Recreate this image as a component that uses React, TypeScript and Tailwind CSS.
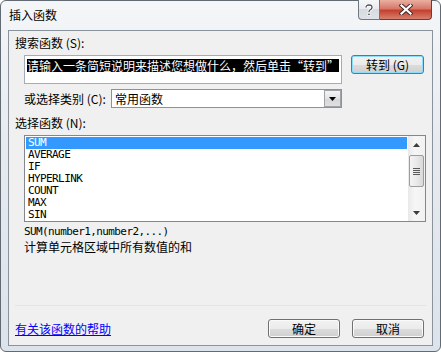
import React from "react";

const functions = ["SUM", "AVERAGE", "IF", "HYPERLINK", "COUNT", "MAX", "SIN"];

function Arrow({ up }: { up?: boolean }) {
  return (
    <svg width="7" height="4" viewBox="0 0 7 4">
      <path d={up ? "M3.5 0 L7 4 L0 4 Z" : "M0 0 L7 0 L3.5 4 Z"} fill="#3c3c3c" />
    </svg>
  );
}

function Button({ children, className, focused }: { children: React.ReactNode; className: string; focused?: boolean }) {
  return (
    <div
      className={
        "h-[19px] rounded-[3px] border flex items-center justify-center leading-none bg-[linear-gradient(#f2f2f2,#ebebeb_50%,#dddddd_50%,#cfcfcf)] " +
        (focused
          ? "border-[#3c7fb1] shadow-[inset_0_0_0_1px_#8fdcf8] "
          : "border-[#707070] shadow-[inset_0_0_0_1px_#fbfbfb] ") +
        className
      }
    >
      {children}
    </div>
  );
}

function TitleBar() {
  return (
    <div className="h-[29px] flex justify-between items-start">
      <div className="pl-[8px] pt-[8px] leading-[12px] text-[12px] text-black">插入函数</div>
      <div className="flex -mt-[1px] mr-[8px]">
        <div className="w-[22px] h-[20px] border border-[#6f7780] border-t-0 rounded-bl-[4px] bg-[linear-gradient(#f6f7f9,#e6e9ed_50%,#d6dbe0_50%,#dfe3e8)] flex items-center justify-center">
          <svg width="10" height="12" viewBox="0 0 10 12">
            <path d="M2 3.5 Q2 1 5 1 Q8 1 8 3.5 Q8 5 6 6 Q5 6.5 5 8" fill="none" stroke="#ffffff" strokeWidth="3" />
            <path d="M2 3.5 Q2 1 5 1 Q8 1 8 3.5 Q8 5 6 6 Q5 6.5 5 8" fill="none" stroke="#4a4f55" strokeWidth="1.3" />
            <rect x="3.8" y="9.2" width="2.4" height="2.4" fill="#4a4f55" stroke="#ffffff" strokeWidth="0.8" />
          </svg>
        </div>
        <div className="w-[52px] h-[20px] border border-[#6e3a33] border-t-0 border-l-0 rounded-br-[4px] bg-[linear-gradient(#eab0a2,#d7786a_45%,#c4412f_55%,#d6806e)] flex items-center justify-center">
          <svg width="14" height="11" viewBox="0 0 14 11">
            <path d="M2.5 1.5 L11.5 9.5 M11.5 1.5 L2.5 9.5" stroke="#4a2a26" strokeWidth="4.2" strokeLinecap="square" />
            <path d="M2.5 1.5 L11.5 9.5 M11.5 1.5 L2.5 9.5" stroke="#ffffff" strokeWidth="2.2" strokeLinecap="square" />
          </svg>
        </div>
      </div>
    </div>
  );
}

export default function App() {
  return (
    <div className="w-[441px] h-[352px] bg-white font-['Noto_Sans_CJK_SC',sans-serif] text-[12px] text-black">
      <div className="w-full h-full flex flex-col border border-[#626a73] rounded-[6px] bg-[linear-gradient(#f4f6f8,#e7ebf0_40%,#dde3ea)]">
        <TitleBar />
        <div className="mx-[7px] h-[316px] border border-[#8a929b] bg-[#f0f0f0] flex flex-col">
          <div className="pl-[6px] pt-[6px] leading-[12px]">搜索函数 (S):</div>

          <div className="mt-[6px] flex items-start">
            <div className="ml-[15px] w-[318px] h-[29px] border border-[#a5acb5] bg-white pl-[2px] pt-[1px]">
              <span className="inline-block bg-black text-white leading-[13px] whitespace-nowrap">
                请输入一条简短说明来描述您想做什么，然后单击
                <span className="inline-block w-[12px] text-right">“</span>转到
                <span className="inline-block w-[12px] text-left">”</span>
              </span>
            </div>
            <Button focused className="ml-[9px] w-[73px]">转到 (G)</Button>
          </div>

          <div className="mt-[5px] flex items-center h-[19px]">
            <div className="pl-[15px] w-[102px] leading-[12px]">或选择类别 (C):</div>
            <div className="w-[231px] h-[19px] border border-[#8e9196] bg-white flex items-center justify-between">
              <span className="pl-[3px] leading-[12px]">常用函数</span>
              <div className="w-[17px] h-[17px] border border-[#9ea3a9] bg-[linear-gradient(#f4f4f4,#e4e4e4_50%,#d6d6d6_50%,#e0e0e0)] flex items-center justify-center">
                <svg width="7" height="4" viewBox="0 0 7 4">
                  <path d="M0 0 L7 0 L3.5 4 Z" fill="#000" />
                </svg>
              </div>
            </div>
          </div>

          <div className="mt-[9px] pl-[6px] leading-[12px]">选择函数 (N):</div>

          <div className="mt-[6px] ml-[15px] w-[402px] h-[87px] border border-[#828790] bg-white flex">
            <div className="flex-1 p-[1px] font-['DejaVu_Sans_Mono',monospace] text-[11px] tracking-[-0.6px]">
              {functions.map((f, i) => (
                <div
                  key={f}
                  className={"h-[12px] leading-[12px] pl-[2px] " + (i === 0 ? "bg-[#3399ff] text-white" : "")}
                >
                  {f}
                </div>
              ))}
            </div>
            <div className="w-[17px] flex flex-col bg-[linear-gradient(90deg,#e9e9e9,#f6f6f6_40%,#f1f1f1)]">
              <div className="h-[17px] flex items-center justify-center">
                <Arrow up />
              </div>
              <div className="mt-[2px] mx-[1px] h-[32px] rounded-[2px] border border-[#9a9da1] bg-[linear-gradient(90deg,#f4f4f4,#e9e9e9_50%,#d9d9d9)] flex flex-col items-center justify-center gap-[1px]">
                {[0, 1, 2, 3].map((k) => (
                  <div key={k} className="w-[7px] h-[1px] bg-[#5a5a5a]" />
                ))}
              </div>
              <div className="flex-1" />
              <div className="h-[17px] flex items-center justify-center">
                <Arrow />
              </div>
            </div>
          </div>

          <div className="mt-[4px] ml-[15px] leading-[12px] font-['DejaVu_Sans_Mono',monospace] text-[11px] tracking-[-0.6px]">
            SUM(number1,number2,...)
          </div>
          <div className="mt-[3px] ml-[15px] leading-[12px]">计算单元格区域中所有数值的和</div>

          <div className="mt-auto mx-[6px] h-px bg-[#dde4ea]" />

          <div className="mt-[13px] mb-[7px] flex items-center pl-[6px] pr-[8px]">
            <a href="#" className="flex-1 leading-[12px] text-[#0000ff] underline">有关该函数的帮助</a>
            <Button className="w-[72px]">确定</Button>
            <Button className="ml-[12px] w-[72px]">取消</Button>
          </div>
        </div>
      </div>
    </div>
  );
}
